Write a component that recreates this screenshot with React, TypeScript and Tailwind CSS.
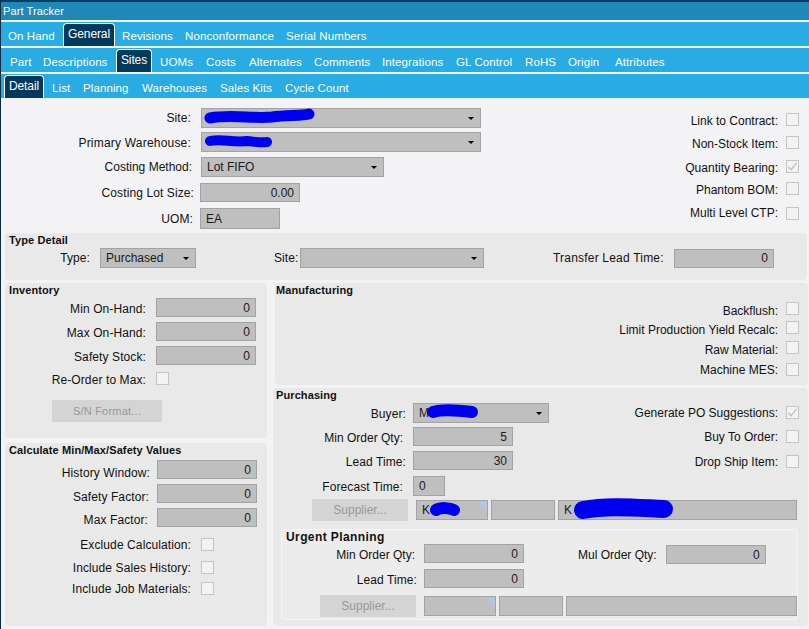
import React from "react";

function Tab({ label, className = "" }: { label: string; className?: string }) {
  return <span className={`shrink-0 whitespace-nowrap text-white text-[11.5px] tracking-[0.1px] mt-[3px] ${className}`}>{label}</span>;
}

function ActiveTab({ label, className = "" }: { label: string; className?: string }) {
  return (
    <span
      className={`shrink-0 self-end flex justify-center pt-[3px] text-white tracking-[-0.1px] bg-[#03395c] border border-b-0 border-white rounded-t-[4px] ${className}`}
    >
      {label}
    </span>
  );
}

function Field({
  value,
  right,
  className = "",
  children,
}: {
  value?: string;
  right?: boolean;
  className?: string;
  children?: React.ReactNode;
}) {
  return (
    <div
      className={`relative shrink-0 flex items-center tracking-normal bg-[#bfbfbf] border border-[#a3a3a3] text-[#1a1a1a] ${right ? "justify-end pr-[5px]" : "pl-[5px]"} ${className}`}
    >
      {value}
      {children}
    </div>
  );
}

function Caret() {
  return (
    <span className="absolute right-[6px] top-[8px] w-0 h-0 border-x-[3px] border-x-transparent border-t-[3px] border-t-black" />
  );
}

function Check({ checked, className = "" }: { checked?: boolean; className?: string }) {
  return (
    <span className={`shrink-0 w-[13px] h-[13px] border border-[#c4c4c4] bg-[#f3f3f4] flex items-center justify-center ${className}`}>
      {checked && (
        <svg viewBox="0 0 12 12" className="w-[11px] h-[11px]" fill="none" stroke="#c0c0c0" strokeWidth="1.4">
          <path d="M1.5 6.5 L4.5 9.5 L10.5 2" />
        </svg>
      )}
    </span>
  );
}

function Corner() {
  return (
    <span className="absolute top-0 right-0 w-0 h-0 border-t-[10px] border-t-[#b3c6dd] border-l-[10px] border-l-transparent" />
  );
}

function Scribble({ d, width }: { d: string; width: number }) {
  return (
    <svg className="absolute left-0 top-0 overflow-visible" width="10" height="10" fill="none">
      <path d={d} stroke="#0000f0" strokeWidth={width} strokeLinecap="round" strokeLinejoin="round" />
    </svg>
  );
}

function Title({ children, className = "text-[11px]" }: { children: string; className?: string }) {
  return <div className={`font-bold leading-[13px] text-[#111] ${className}`}>{children}</div>;
}

function SideCheck({
  label,
  checked,
  className = "",
  labelClass = "mt-[3px]",
}: {
  label: string;
  checked?: boolean;
  className?: string;
  labelClass?: string;
}) {
  return (
    <div className={`flex items-center justify-end h-[14px] tracking-normal ${className}`}>
      <span className={labelClass}>{label}</span>
      <Check checked={checked} className="ml-[8px]" />
    </div>
  );
}

export default function App() {
  return (
    <div className="w-[809px] h-[629px] overflow-hidden bg-[#f3f3f6] border-l border-[#0b2b45] text-[12px] leading-[14px] tracking-[0.1px] text-[#111] font-['Liberation_Sans',Arial,sans-serif]">
      <div className="h-[2px] bg-[#063e63] -ml-px" />
      <div className="h-[18px] bg-[#2088b8] flex items-center pl-[2px] text-white text-[11px] tracking-[0.1px]">Part Tracker</div>

      <div className="mt-[2px] h-[24px] bg-[#29abe3] flex items-center">
        <Tab label="On Hand" className="ml-[7px] w-[55px]" />
        <ActiveTab label="General" className="w-[52px] h-[23px]" />
        <Tab label="Revisions" className="ml-[7px] w-[63px]" />
        <Tab label="Nonconformance" className="w-[101px]" />
        <Tab label="Serial Numbers" />
      </div>
      <div className="mt-[2px] h-[24px] bg-[#29abe3] flex items-center">
        <Tab label="Part" className="ml-[9px] w-[33px]" />
        <Tab label="Descriptions" className="w-[73px]" />
        <ActiveTab label="Sites" className="w-[36px] h-[23px]" />
        <Tab label="UOMs" className="ml-[8px] w-[46px]" />
        <Tab label="Costs" className="w-[43px]" />
        <Tab label="Alternates" className="w-[65px]" />
        <Tab label="Comments" className="w-[68px]" />
        <Tab label="Integrations" className="w-[74px]" />
        <Tab label="GL Control" className="w-[69px]" />
        <Tab label="RoHS" className="w-[43px]" />
        <Tab label="Origin" className="w-[47px]" />
        <Tab label="Attributes" />
      </div>
      <div className="mt-[2px] h-[24px] bg-[#29abe3] flex items-center">
        <ActiveTab label="Detail" className="ml-[3px] w-[40px] h-[23px]" />
        <Tab label="List" className="ml-[8px] w-[31px]" />
        <Tab label="Planning" className="w-[59px]" />
        <Tab label="Warehouses" className="w-[78px]" />
        <Tab label="Sales Kits" className="w-[65px]" />
        <Tab label="Cycle Count" />
      </div>

      {/* top form */}
      <div className="h-[135px] flex justify-between pr-[10px]">
        <div className="pt-[10px]">
          <div className="flex items-center h-[20px]">
            <span className="w-[190px] text-right">Site:</span>
            <Field className="ml-[10px] w-[280px] h-[20px]">
              <Scribble d="M8 9 C30 5 50 10 70 8 C85 6 100 7 107 5" width={11} />
              <Caret />
            </Field>
          </div>
          <div className="flex items-center h-[20px] mt-[4px]">
            <span className="w-[190px] text-right mt-[2px] tracking-[0.2px]">Primary Warehouse:</span>
            <Field className="ml-[10px] w-[280px] h-[20px]">
              <Scribble d="M8 8 C20 5 30 10 45 8 C55 9 60 10 65 9" width={10} />
              <Caret />
            </Field>
          </div>
          <div className="flex items-center h-[20px] mt-[5px]">
            <span className="w-[191px] text-right tracking-normal">Costing Method:</span>
            <Field value="Lot FIFO" className="ml-[9px] w-[183px] h-[20px]">
              <Caret />
            </Field>
          </div>
          <div className="flex items-center h-[19px] mt-[6px]">
            <span className="w-[193px] text-right">Costing Lot Size:</span>
            <Field value="0.00" right className="ml-[6px] w-[100px] h-[19px]" />
          </div>
          <div className="flex items-center h-[21px] mt-[6px]">
            <span className="w-[192px] text-right">UOM:</span>
            <Field value="EA" className="ml-[7px] w-[80px] h-[21px]" />
          </div>
        </div>
        <div className="pt-[14px]">
          <SideCheck label="Link to Contract:" />
          <SideCheck label="Non-Stock Item:" className="mt-[9px]" />
          <SideCheck label="Quantity Bearing:" checked className="mt-[10px]" />
          <SideCheck label="Phantom BOM:" className="mt-[8px]" />
          <SideCheck label="Multi Level CTP:" className="mt-[11px]" labelClass="" />
        </div>
      </div>

      {/* type detail */}
      <div className="mx-[4px] w-[802px] h-[47px] bg-[#e9e9e9] rounded-[4px] pl-[4px] pt-[1px]">
        <Title>Type Detail</Title>
        <div className="flex items-center h-[20px] mt-[1px]">
          <span className="w-[81px] text-right">Type:</span>
          <Field value="Purchased" className="ml-[10px] w-[96px] h-[20px] tracking-[-0.3px]">
            <Caret />
          </Field>
          <span className="ml-[78px] w-[25px]">Site:</span>
          <Field className="ml-px w-[184px] h-[20px]">
            <Caret />
          </Field>
          <span className="ml-[69px] w-[111px] whitespace-nowrap tracking-[0.2px]">Transfer Lead Time:</span>
          <Field value="0" right className="ml-[10px] w-[100px] h-[19px]" />
        </div>
      </div>

      <div className="mt-[3px] flex">
        <div className="ml-[4px] w-[262px] shrink-0">
          {/* inventory */}
          <div className="h-[155px] bg-[#e9e9e9] rounded-[4px] pt-[1px] pl-[4px]">
            <Title>Inventory</Title>
            <div className="flex items-center h-[19px] mt-[1px]">
              <span className="w-[137px] text-right mt-[3px]">Min On-Hand:</span>
              <Field value="0" right className="ml-[10px] w-[100px] h-[19px]" />
            </div>
            <div className="flex items-center h-[19px] mt-[5px]">
              <span className="w-[137px] text-right mt-[3px]">Max On-Hand:</span>
              <Field value="0" right className="ml-[10px] w-[100px] h-[19px]" />
            </div>
            <div className="flex items-center h-[19px] mt-[5px]">
              <span className="w-[137px] text-right mt-[2px]">Safety Stock:</span>
              <Field value="0" right className="ml-[10px] w-[100px] h-[19px]" />
            </div>
            <div className="flex items-center h-[13px] mt-[7px]">
              <span className="w-[137px] text-right mt-[2px]">Re-Order to Max:</span>
              <Check className="ml-[10px]" />
            </div>
            <button className="block ml-[43px] mt-[15px] w-[110px] h-[22px] bg-[#d4d4d4] text-[#999] text-[11px] tracking-[0.2px]">S/N Format...</button>
          </div>
          {/* calculate */}
          <div className="mt-[5px] h-[183px] bg-[#e9e9e9] rounded-[4px] pt-[1px] pl-[4px]">
            <Title>Calculate Min/Max/Safety Values</Title>
            <div className="flex items-center h-[19px] mt-[3px]">
              <span className="w-[141px] text-right mt-[6px]">History Window:</span>
              <Field value="0" right className="ml-[7px] w-[100px] h-[19px]" />
            </div>
            <div className="flex items-center h-[19px] mt-[5px]">
              <span className="w-[140px] text-right mt-[6px]">Safety Factor:</span>
              <Field value="0" right className="ml-[8px] w-[100px] h-[19px]" />
            </div>
            <div className="flex items-center h-[19px] mt-[5px]">
              <span className="w-[139px] text-right mt-[4px]">Max Factor:</span>
              <Field value="0" right className="ml-[9px] w-[100px] h-[19px]" />
            </div>
            <div className="flex items-center h-[13px] mt-[11px]">
              <span className="w-[182px] text-right">Exclude Calculation:</span>
              <Check className="ml-[10px]" />
            </div>
            <div className="flex items-center h-[13px] mt-[10px]">
              <span className="w-[182px] text-right">Include Sales History:</span>
              <Check className="ml-[10px]" />
            </div>
            <div className="flex items-center h-[13px] mt-[8px]">
              <span className="w-[182px] text-right">Include Job Materials:</span>
              <Check className="ml-[10px]" />
            </div>
          </div>
        </div>

        <div className="ml-[6px] w-[535px] shrink-0">
          {/* manufacturing */}
          <div className="ml-[2px] h-[102px] bg-[#e9e9e9] rounded-[4px] pt-[1px] pl-[1px] pr-[9px]">
            <Title>Manufacturing</Title>
            <SideCheck label="Backflush:" className="mt-[4px]" labelClass="mt-[6px]" />
            <SideCheck label="Limit Production Yield Recalc:" className="mt-[5px]" labelClass="mt-[6px]" />
            <SideCheck label="Raw Material:" className="mt-[6px]" labelClass="mt-[6px]" />
            <SideCheck label="Machine MES:" className="mt-[8px]" labelClass="mt-[1px]" />
          </div>
          {/* purchasing */}
          <div className="mt-[3px] h-[238px] bg-[#e9e9e9] rounded-[4px] pt-[1px] pl-[3px] pr-[9px]">
            <Title>Purchasing</Title>
            <div className="flex">
              <div className="w-[277px] shrink-0">
                <div className="flex items-center h-[20px] mt-[1px]">
                  <span className="w-[130px] text-right mt-[1px]">Buyer:</span>
                  <Field className="ml-[7px] w-[136px] h-[20px]">
                    M
                    <Scribble d="M19 8 C28 5 42 6 58 8" width={12} />
                    <Caret />
                  </Field>
                </div>
                <div className="flex items-center h-[19px] mt-[4px]">
                  <span className="w-[127px] text-right mt-[2px] tracking-normal">Min Order Qty:</span>
                  <Field value="5" right className="ml-[10px] w-[100px] h-[19px]" />
                </div>
                <div className="flex items-center h-[19px] mt-[5px]">
                  <span className="w-[130px] text-right mt-[2px]">Lead Time:</span>
                  <Field value="30" right className="ml-[7px] w-[100px] h-[19px]" />
                </div>
                <div className="flex items-center h-[20px] mt-[6px]">
                  <span className="w-[127px] text-right mt-[1px]">Forecast Time:</span>
                  <Field value="0" className="ml-[10px] w-[32px] h-[20px]" />
                </div>
              </div>
              <div className="flex-1 pt-[3px]">
                <SideCheck label="Generate PO Suggestions:" labelClass="mt-[1px]" checked />
                <SideCheck label="Buy To Order:" className="mt-[10px]" labelClass="mt-[1px]" />
                <SideCheck label="Drop Ship Item:" className="mt-[11px]" labelClass="mt-[1px]" />
              </div>
            </div>
            <div className="flex items-center mt-[3px]">
              <button className="ml-[36px] w-[96px] h-[22px] bg-[#d4d4d4] text-[#999] tracking-normal">Supplier...</button>
              <Field value="K" className="ml-[8px] w-[72px] h-[20px]">
                <Corner />
                <Scribble d="M19 9 C24 6 33 7 37 9" width={12} />
              </Field>
              <Field className="ml-[3px] w-[64px] h-[20px]" />
              <Field value="K" className="ml-[3px] w-[239px] h-[20px]">
                <Scribble d="M24 9 C50 4 80 7 105 8" width={18} />
              </Field>
            </div>
            {/* urgent planning */}
            <div className="mt-[8px] ml-[5px] mr-[1px] h-[91px] bg-[#ececec] border border-[#f5f5f5] rounded-[4px] pl-[4px] pt-[1px]">
              <Title className="text-[12px] tracking-[0.4px]">Urgent Planning</Title>
              <div className="flex items-center h-[19px]">
                <span className="w-[129px] text-right mt-[2px] tracking-normal">Min Order Qty:</span>
                <Field value="0" right className="ml-[9px] w-[100px] h-[19px]" />
                <span className="ml-[54px] mt-[2px] tracking-normal">Mul Order Qty:</span>
                <Field value="0" right className="ml-[9px] mt-[2px] w-[100px] h-[19px]" />
              </div>
              <div className="flex items-center h-[19px] mt-[6px]">
                <span className="w-[131px] text-right mt-[2px]">Lead Time:</span>
                <Field value="0" right className="ml-[7px] w-[100px] h-[19px]" />
              </div>
              <div className="flex items-center mt-[7px]">
                <button className="ml-[34px] w-[96px] h-[22px] bg-[#d4d4d4] text-[#999] tracking-normal">Supplier...</button>
                <Field className="ml-[8px] w-[72px] h-[20px]">
                  <Corner />
                </Field>
                <Field className="ml-[3px] w-[64px] h-[20px]" />
                <Field className="ml-[3px] w-[231px] h-[20px]" />
              </div>
            </div>
          </div>
        </div>
      </div>
    </div>
  );
}
